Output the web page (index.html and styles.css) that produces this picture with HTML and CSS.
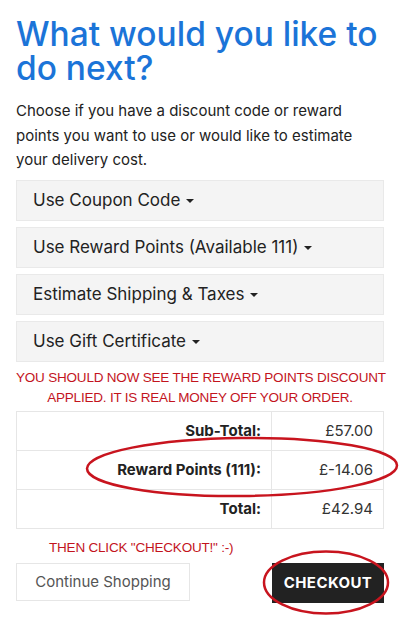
FILE: index.html
```html
<!DOCTYPE html>
<html lang="en">
<head>
<meta charset="utf-8">
<title>Shopping Cart</title>
<link rel="stylesheet" href="styles.css">
</head>
<body>
<div id="content">
	<h2 class="next-title">What would you like to do next?</h2>
	<p class="next-intro">Choose if you have a discount code or reward points you want to use or would like to estimate your delivery cost.</p>

	<div class="panel-group">
		<div class="panel"><span class="panel-title">Use Coupon Code <i class="caret"></i></span></div>
		<div class="panel"><span class="panel-title">Use Reward Points (Available 111) <i class="caret"></i></span></div>
		<div class="panel"><span class="panel-title">Estimate Shipping &amp; Taxes <i class="caret"></i></span></div>
		<div class="panel"><span class="panel-title">Use Gift Certificate <i class="caret"></i></span></div>
	</div>

	<div class="note note-center">YOU SHOULD NOW SEE THE REWARD POINTS DISCOUNT<br>APPLIED. IT IS REAL MONEY OFF YOUR ORDER.</div>

	<table class="totals">
		<tr>
			<td class="lbl">Sub-Total:</td>
			<td class="val">£57.00</td>
		</tr>
		<tr>
			<td class="lbl">Reward Points (111):</td>
			<td class="val">£-14.06</td>
		</tr>
		<tr>
			<td class="lbl">Total:</td>
			<td class="val">£42.94</td>
		</tr>
	</table>

	<div class="note note-then">THEN CLICK "CHECKOUT!" :-)</div>

	<div class="buttons">
		<a href="#" class="btn btn-default">Continue Shopping</a>
		<a href="#" class="btn btn-primary">Checkout</a>
	</div>

	<!-- hand drawn circles -->
	<svg class="marks" width="400" height="632" viewBox="0 0 400 632">
		<ellipse cx="242" cy="467" rx="155" ry="29" transform="rotate(-0.6 242 467)" />
		<ellipse cx="326" cy="582.5" rx="62" ry="31" />
	</svg>
</div>
</body>
</html>
```

FILE: styles.css
```css
html,body{margin:0; padding:0; background:#fff;}
body{font-family:"Inter","Noto Sans",sans-serif; color:#222;}
#content{position:relative; padding:0 16px; height:632px; overflow:hidden;}

.next-title{margin:0; padding-top:17px; font-size:33.5px; line-height:34px; font-weight:500; color:#1b74d8; letter-spacing:0;}
.next-intro{margin:14px 0 0; font-size:15px; line-height:24.5px; color:#222;}

.panel-group{margin-top:7px;}
.panel{height:39px; margin-bottom:6px; background:#f4f4f4; border:1px solid #e9e9e9; display:flex; align-items:center;}
.panel-title{padding-left:16px; font-size:17px; color:#222;}
.caret{display:inline-block; width:0; height:0; margin-left:1px; vertical-align:middle; border-top:4px solid #222; border-left:4px solid transparent; border-right:4px solid transparent;}

.note{font-family:"Liberation Sans",Arial,sans-serif; color:#c3141d; font-size:13.5px; line-height:20px; letter-spacing:-0.2px; white-space:nowrap;}
.note-center{margin-top:1px; text-align:center;}
.note-then{margin-top:9px; padding-left:33px;}

.totals{width:100%; margin-top:3px; border-collapse:collapse;}
.totals td{height:38px; padding:0 10px; border:1px solid #e6e6e6; text-align:right; font-size:15px;}
.totals .lbl{font-weight:700; color:#222;}
.totals .val{width:91px; color:#333;}

.buttons{display:flex; justify-content:space-between; margin-top:5px;}
.btn{display:flex; align-items:center; justify-content:center; text-decoration:none; box-sizing:border-box;}
.btn-default{width:174px; height:38px; border:1px solid #e6e6e6; color:#555; font-size:15px;}
.btn-primary{width:112px; height:40px; background:#222; color:#fff; font-weight:700; font-size:15px; letter-spacing:0.4px; text-transform:uppercase;}

.marks{position:absolute; left:0; top:0; pointer-events:none;}
.marks ellipse{fill:none; stroke:#c8141e; stroke-width:2.5;}
```
